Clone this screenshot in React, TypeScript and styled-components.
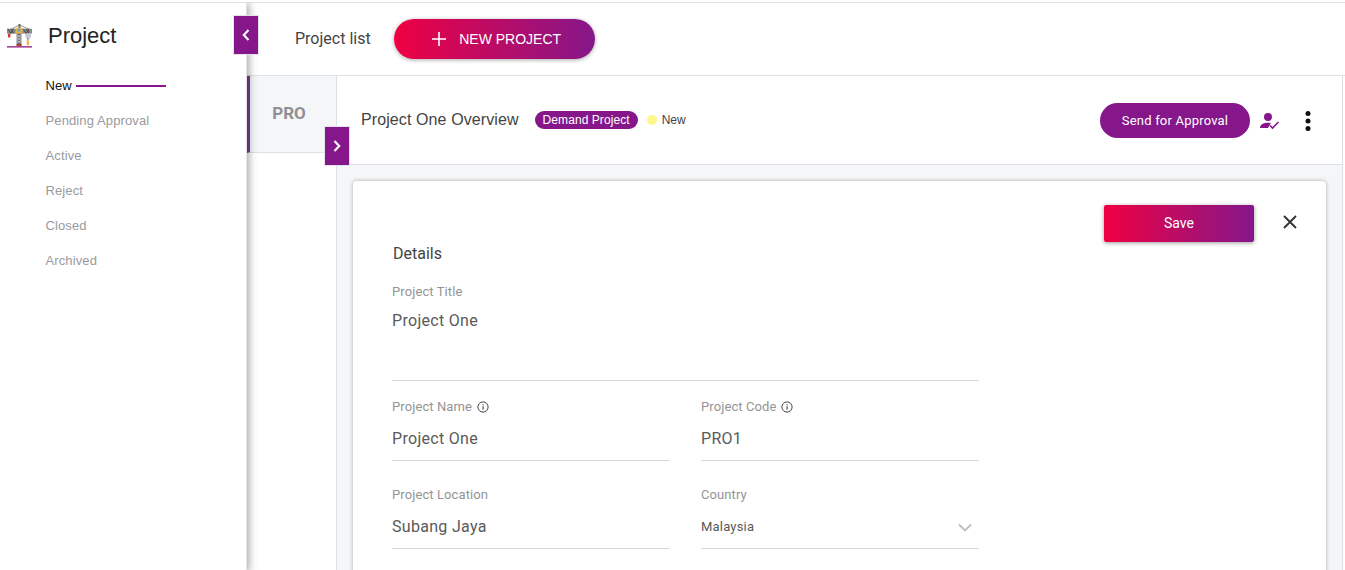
import React from 'react';
import styled, { createGlobalStyle } from 'styled-components';

const Global = createGlobalStyle`
  html, body { margin: 0; padding: 0; height: 100%; background: #fff; overflow: hidden; }
  #root { height: 100%; }
  * { box-sizing: border-box; }
  body { font-family: Roboto, "Liberation Sans", sans-serif; }
`;

const Page = styled.div`
  height: 570px; width: 1345px; display: flex; border-top: 1px solid #dde1e6; margin-top: 2px; overflow: hidden; position: relative;
`;
const Sidebar = styled.aside`
  width: 247px; flex: none; height: 100%; background: #fff; position: relative; z-index: 2;
  box-shadow: 2px 0 8px rgba(0,0,0,.35); border-right: 1px solid #e2e4e8;
`;
const Brand = styled.div`
  display: flex; align-items: center; height: 65px; padding: 0 0 0 7px; gap: 16px;
`;
const BrandTitle = styled.h1`
  margin: 0; font: 400 22px/28px "Liberation Sans", sans-serif; color: #222; position: relative; top: 0;
`;
const Menu = styled.ul`
  list-style: none; margin: 0; padding: 0 0 0 45.5px;
`;
const MenuItem = styled.li<{ $active?: boolean }>`
  display: flex; align-items: center; gap: 4px; height: 35px; font: 13px/35px "Liberation Sans", sans-serif; letter-spacing: .12px;
  color: ${p => (p.$active ? '#111' : '#9a9a9e')};
`;
const MenuLine = styled.span`
  width: 90px; height: 2px; background: #85178a;
`;
const SquareToggle = styled.button<{ $left: number; $top: number }>`
  position: absolute; left: ${p => p.$left}px; top: ${p => p.$top}px; width: 26px; height: 40px; padding: 0 1px 0 0;
  border: 1px solid #e2e4ea; background: #85178a; color: #fff; display: flex; align-items: center; justify-content: center; z-index: 5;
`;
const Content = styled.div`
  flex: 1; min-width: 0; display: flex; flex-direction: column; height: 100%;
`;
const TopBar = styled.header`
  height: 73px; flex: none; display: flex; align-items: center; padding: 0 0 1px 48px; gap: 23px; border-bottom: 1px solid #dcdfe3;
`;
const ListLabel = styled.span`
  font: 16px/20px Roboto, sans-serif; color: #444;
`;
const NewButton = styled.button`
  width: 201px; height: 40px; border: 0; border-radius: 20px; display: flex; align-items: center; justify-content: center; gap: 12px;
  padding: 0 0 0 4px;
  background: linear-gradient(90deg, #ef0042, #85178a); color: #fff; font: 14px/20px "Liberation Sans", sans-serif;
  box-shadow: 0 1px 4px rgba(0,0,0,.35);
`;
const Body = styled.div`
  flex: 1; min-height: 0; display: flex;
`;
const ListColumn = styled.div`
  width: 90px; flex: none; border-right: 1px solid #dcdfe3;
`;
const Tab = styled.div`
  height: 77px; background: #f5f6f8; border-left: 3px solid #7e3f91; border-bottom: 1px solid #dcdfe3; display: flex; align-items: center; justify-content: center;
  font: 700 17px/20px Roboto, sans-serif; color: #8f8f92; padding: 0 8px 2px 0;
`;
const Detail = styled.main`
  flex: 1; min-width: 0; display: flex; flex-direction: column; margin-right: 2px; border-right: 1px solid #dcdfe3; background: #f5f6f8;
`;
const DetailHead = styled.div`
  height: 89px; flex: none; background: #fff; border-bottom: 1px solid #dcdfe3; display: flex; align-items: flex-start; padding: 27px 16px 0 24px;
`;
const DetailTitle = styled.h2`
  margin: 1px 0 0; font: 400 16px/32px "Liberation Sans", sans-serif; letter-spacing: .1px; color: #444;
`;
const Pill = styled.span`
  margin: 8px 0 0 16px; height: 18px; padding: 0 8px; border-radius: 9px; background: #85178a; color: #fff; font: 12px/18px "Liberation Sans", sans-serif; letter-spacing: .07px;
`;
const StatusDot = styled.span`
  margin: 12px 0 0 9px; width: 10px; height: 10px; border-radius: 50%; background: #fdf68a;
`;
const StatusText = styled.span`
  margin: 8px 0 0 5px; font: 12px/18px "Liberation Sans", sans-serif; color: #444;
`;
const Spacer = styled.div`
  flex: 1;
`;
const ApproveButton = styled.button`
  height: 35px; width: 150px; border: 0; border-radius: 17.5px; background: #85178a; color: #fff; font: 13px/35px "Roboto", sans-serif; letter-spacing: .2px; padding: 0;
`;
const IconSlot = styled.div<{ $w: number }>`
  width: ${p => p.$w}px; height: 35px; display: flex; align-items: center; justify-content: center; flex: none;
`;
const CardArea = styled.div`
  flex: 1; padding: 16px 16px 0 16px; min-height: 0;
`;
const Card = styled.section`
  background: #fff; border-radius: 4px 4px 0 0; height: 420px; box-shadow: 0 0 4px rgba(0,0,0,.3); padding: 0 0 0 39px; position: relative;
`;
const CardActions = styled.div`
  position: absolute; top: 24px; right: 24px; display: flex; align-items: flex-start; gap: 24px;
`;
const SaveButton = styled.button`
  width: 150px; height: 37px; border: 0; border-radius: 2px; color: #fff; background: linear-gradient(90deg, #ef0042, #85178a);
  font: 14px/37px Roboto, sans-serif; box-shadow: 0 1px 4px rgba(0,0,0,.4); padding: 0;
`;
const CloseBtn = styled.div`
  width: 24px; height: 24px; margin-top: 5px; display: flex; align-items: center; justify-content: center; color: #333;
`;
const SectionTitle = styled.h3`
  margin: 0; padding: 63px 0 0 1px; font: 400 16px/20px Roboto, sans-serif; color: #444;
`;
const FormGrid = styled.div`
  width: 587px; margin-top: 20px; display: grid; grid-template-columns: 278px 278px; column-gap: 31px; row-gap: 18px;
`;
const Field = styled.div<{ $wide?: boolean; $h: number; $top?: number }>`
  ${p => (p.$wide ? 'grid-column: 1 / -1;' : '')}
  height: ${p => p.$h}px; margin-top: ${p => p.$top ?? 0}px; border-bottom: 1px solid #d9d9d9; position: relative;
`;
const FieldLabel = styled.label`
  display: flex; align-items: center; gap: 5px; font: 13px/16px Roboto, sans-serif; color: #949494; letter-spacing: .1px; height: 16px;
`;
const FieldValue = styled.div<{ $small?: boolean; $gap: number }>`
  margin-top: ${p => p.$gap}px; font: ${p => (p.$small ? '13px' : '16px')}/24px Roboto, sans-serif; color: #5a5a5a; letter-spacing: ${p => (p.$small ? '.2px' : '.3px')};
`;
const Caret = styled.svg`
  position: absolute; right: 7px; top: 36px;
`;

const Crane = () => (
  <svg width="25" height="25" viewBox="0 0 26 26">
    <path d="M13 2 L3 7 M13 2 L24 7" stroke="#777" strokeWidth=".8" fill="none" />
    <rect x="12" y="1" width="2" height="5" fill="#666" />
    <rect x="0" y="6" width="26" height="5" fill="#8b8b8b" />
    <path d="M1 6l3 5M4 6l3 5M7 6l-3 5M17 6l3 5M20 6l3 5M23 6l-3 5" stroke="#333" strokeWidth=".8" />
    <rect x="9" y="5" width="7" height="6" fill="#f2b33d" />
    <rect x="11" y="6" width="3" height="3" fill="#5aa9d8" />
    <rect x="1" y="11" width="2.5" height="4" fill="#d6382c" />
    <rect x="10" y="11" width="5" height="13" fill="#6b6b6b" />
    <path d="M10 12l5 3M15 12l-5 3M10 15l5 3M15 15l-5 3M10 18l5 3M15 18l-5 3" stroke="#ddd" strokeWidth=".7" />
    <path d="M19 11h6v4h-1l-1 3h-2l-1-3h-1z" fill="#c9c6d6" />
    <rect x="21" y="15" width="1" height="3" fill="#999" />
    <rect x="20.5" y="18" width="2.4" height="5" fill="#f0b14a" />
    <rect x="10" y="22" width="5" height="2" fill="#c0392b" />
    <rect x="0" y="24" width="26" height="1.6" fill="#a23d8f" />
  </svg>
);

const Chevron = ({ dir }: { dir: 'l' | 'r' }) => (
  <svg width="10" height="14" viewBox="0 0 10 14">
    <path d={dir === 'l' ? 'M7.5 2 L2.8 7 L7.5 12' : 'M2.5 2 L7.2 7 L2.5 12'} stroke="#fff" strokeWidth="2.1" fill="none" />
  </svg>
);

const Info = () => (
  <svg width="12" height="12" viewBox="0 0 12 12">
    <circle cx="6" cy="6" r="5.1" stroke="#444" strokeWidth="1" fill="none" />
    <rect x="5.5" y="5.2" width="1.1" height="3.4" fill="#444" />
    <rect x="5.5" y="3.3" width="1.1" height="1.1" fill="#444" />
  </svg>
);

export default function App() {
  return (
    <>
      <Global />
      <Page>
        <Sidebar>
          <Brand>
            <Crane />
            <BrandTitle>Project</BrandTitle>
          </Brand>
          <Menu>
            <MenuItem $active>New<MenuLine /></MenuItem>
            <MenuItem>Pending Approval</MenuItem>
            <MenuItem>Active</MenuItem>
            <MenuItem>Reject</MenuItem>
            <MenuItem>Closed</MenuItem>
            <MenuItem>Archived</MenuItem>
          </Menu>
        </Sidebar>
        <SquareToggle $left={233} $top={12} aria-label="Collapse"><Chevron dir="l" /></SquareToggle>
        <SquareToggle $left={324} $top={123} aria-label="Expand"><Chevron dir="r" /></SquareToggle>
        <Content>
          <TopBar>
            <ListLabel>Project list</ListLabel>
            <NewButton>
              <svg width="16" height="16" viewBox="0 0 16 16"><path d="M8 1v14M1 8h14" stroke="#fff" strokeWidth="1.6" /></svg>
              NEW PROJECT
            </NewButton>
          </TopBar>
          <Body>
            <ListColumn><Tab>PRO</Tab></ListColumn>
            <Detail>
              <DetailHead>
                <DetailTitle>Project One Overview</DetailTitle>
                <Pill>Demand Project</Pill>
                <StatusDot />
                <StatusText>New</StatusText>
                <Spacer />
                <ApproveButton>Send for Approval</ApproveButton>
                <IconSlot $w={40}>
                  <svg width="20" height="18" viewBox="0 0 20 18">
                    <circle cx="8" cy="5" r="4" fill="#85178a" />
                    <path d="M0 16c0-3.5 3.5-5.3 8-5.3 1 0 2 .1 2.9.3L8 16z" fill="#85178a" />
                    <path d="M10 13.5l2.5 2.5 6-6" stroke="#85178a" strokeWidth="1.6" fill="none" />
                  </svg>
                </IconSlot>
                <IconSlot $w={36}>
                  <svg width="6" height="20" viewBox="0 0 6 20" fill="#111">
                    <circle cx="3" cy="2.5" r="2.5" /><circle cx="3" cy="10" r="2.5" /><circle cx="3" cy="17.5" r="2.5" />
                  </svg>
                </IconSlot>
              </DetailHead>
              <CardArea>
                <Card>
                  <CardActions>
                    <SaveButton>Save</SaveButton>
                    <CloseBtn>
                      <svg width="14" height="14" viewBox="0 0 14 14"><path d="M1 1l12 12M13 1L1 13" stroke="#333" strokeWidth="1.9" /></svg>
                    </CloseBtn>
                  </CardActions>
                  <SectionTitle>Details</SectionTitle>
                  <FormGrid>
                    <Field $wide $h={97}>
                      <FieldLabel>Project Title</FieldLabel>
                      <FieldValue $gap={9}>Project One</FieldValue>
                    </Field>
                    <Field $h={62}>
                      <FieldLabel>Project Name <Info /></FieldLabel>
                      <FieldValue $gap={12}>Project One</FieldValue>
                    </Field>
                    <Field $h={62}>
                      <FieldLabel>Project Code <Info /></FieldLabel>
                      <FieldValue $gap={12}>PRO1</FieldValue>
                    </Field>
                    <Field $h={62} $top={8}>
                      <FieldLabel>Project Location</FieldLabel>
                      <FieldValue $gap={12}>Subang Jaya</FieldValue>
                    </Field>
                    <Field $h={62} $top={8}>
                      <FieldLabel>Country</FieldLabel>
                      <FieldValue $small $gap={12}>Malaysia</FieldValue>
                      <Caret width="14" height="9" viewBox="0 0 14 9"><path d="M1 1.5l6 6 6-6" stroke="#bdbdbd" strokeWidth="1.8" fill="none" /></Caret>
                    </Field>
                  </FormGrid>
                </Card>
              </CardArea>
            </Detail>
          </Body>
        </Content>
      </Page>
    </>
  );
}
